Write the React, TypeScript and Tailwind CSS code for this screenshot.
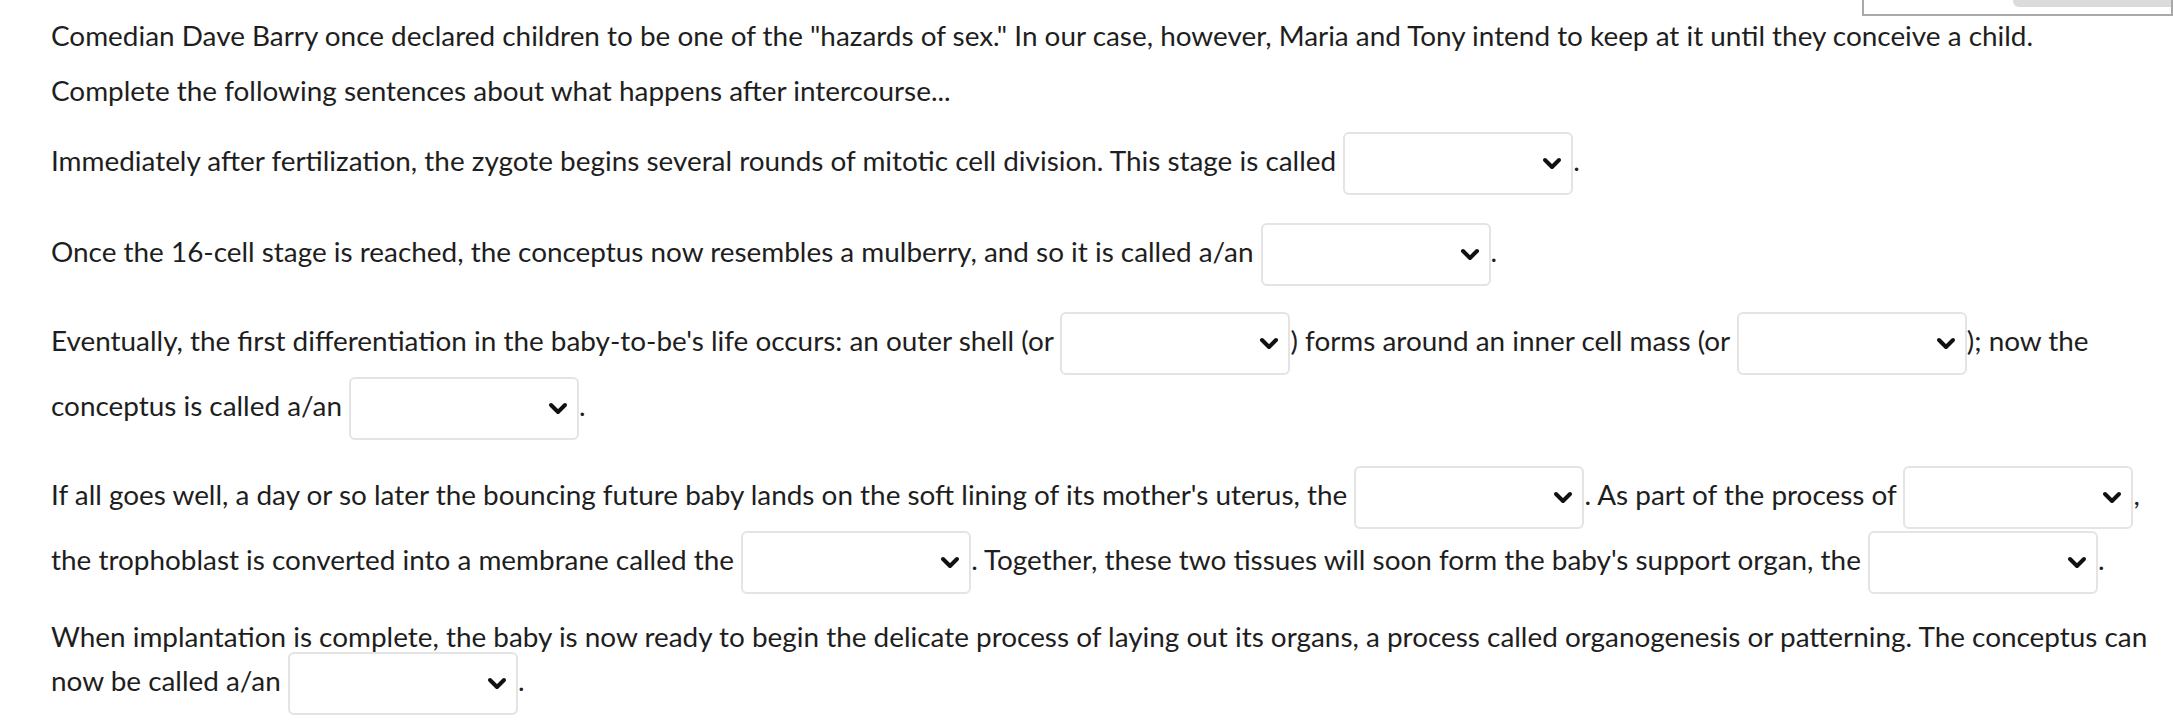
import React from 'react';

function Blank() {
  return (
    <span className="relative inline-block align-middle w-[230px] h-[63px] -my-[10px] rounded-md border-2 border-[#e4e4e4] bg-white">
      <svg className="absolute right-[8px] top-1/2 -translate-y-1/2" width="22" height="14" viewBox="0 0 22 14">
        <polyline points="4,3 11,10 18,3" fill="none" stroke="#111" strokeWidth="4" strokeLinecap="round" strokeLinejoin="round" />
      </svg>
    </span>
  );
}

export default function App() {
  return (
    <div className="relative min-h-screen bg-white text-[#1e1e1e] text-[27.9px] font-['Lato',sans-serif]">
      <div className="absolute right-0 top-[-4px] w-[311px] h-[20px] border-2 border-[#a9a9a9]">
        <div className="absolute right-0 top-0 w-[158px] h-[9px] rounded-bl-md bg-[#dbdbdb]" />
      </div>
      <div className="pl-[51px] pr-[8px] pt-[13px] w-[2173px]">
        <p className="leading-[44px]">Comedian Dave Barry once declared children to be one of the "hazards of sex." In our case, however, Maria and Tony intend to keep at it until they conceive a child.</p>
        <p className="leading-[44px] mt-[11px]">Complete the following sentences about what happens after intercourse...</p>
        <p className="leading-[65px] mt-[16px]">Immediately after fertilization, the zygote begins several rounds of mitotic cell division. This stage is called <Blank />.</p>
        <p className="leading-[65px] mt-[26px]">Once the 16-cell stage is reached, the conceptus now resembles a mulberry, and so it is called a/an <Blank />.</p>
        <p className="leading-[65px] mt-[24px]">Eventually, the first differentiation in the baby-to-be's life occurs: an outer shell (or <Blank />) forms around an inner cell mass (or <Blank />); now the conceptus is called a/an <Blank />.</p>
        <p className="leading-[65px] mt-[24px]">If all goes well, a day or so later the bouncing future baby lands on the soft lining of its mother's uterus, the <Blank />. As part of the process of <span className="whitespace-nowrap"><Blank />,</span> the trophoblast is converted into a membrane called the <Blank />. Together, these two tissues will soon form the baby's support organ, the <Blank />.</p>
        <p className="leading-[44px] mt-[22px]">When implantation is complete, the baby is now ready to begin the delicate process of laying out its organs, a process called organogenesis or patterning. The conceptus can now be called a/an <Blank />.</p>
      </div>
    </div>
  );
}
